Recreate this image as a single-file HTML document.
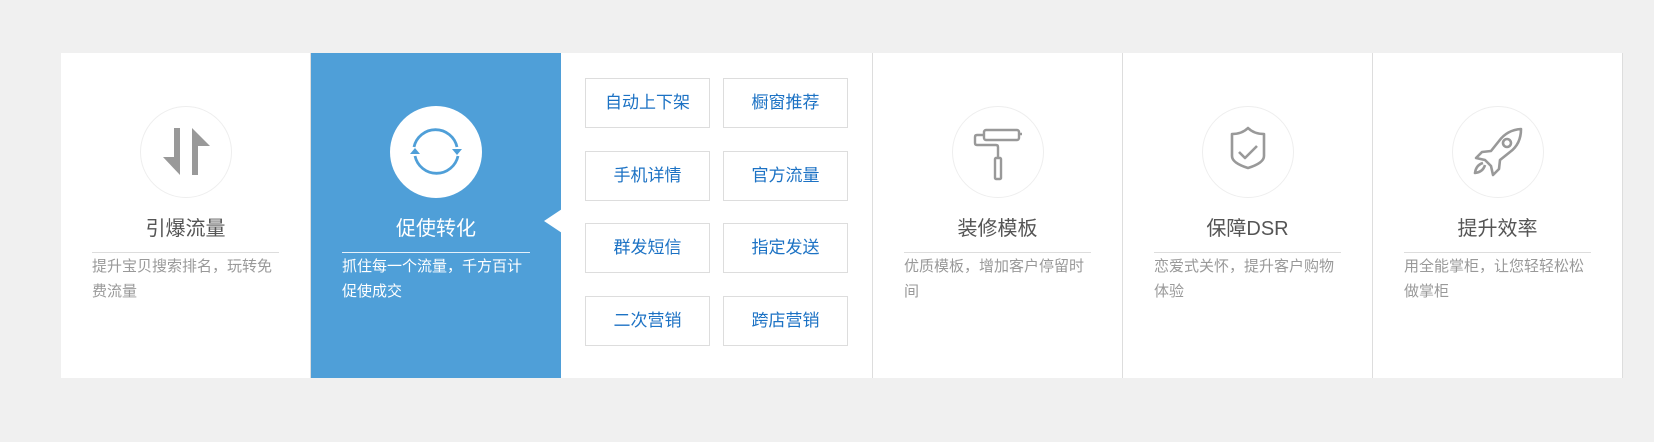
<!DOCTYPE html>
<html><head><meta charset="utf-8"><style>
*{margin:0;padding:0;box-sizing:border-box}
body{width:1654px;height:442px;background:#f0f0f0;position:relative;overflow:hidden;font-family:"Liberation Sans","Noto Sans CJK SC",sans-serif}
.card{position:absolute;left:61px;top:53px;width:1562px;height:325px;background:#fff;border-right:1px solid #ddd}
.col{position:absolute;top:0;height:325px;width:250px}
.sep{border-left:1px solid #ddd}
.ic{position:absolute;left:50%;margin-left:-46px;top:53px;width:92px;height:92px}
.t{position:absolute;left:0;right:0;top:161px;line-height:30px;text-align:center;font-size:20px;color:#555}
.ln{position:absolute;left:31px;right:31px;top:199px;border-top:1px solid #ddd}
.d{position:absolute;left:31px;right:27px;top:201px;font-size:15px;line-height:25px;color:#999}
.blue{background:#4f9fd8}
.blue .t{color:#fff}
.blue .ln{border-color:#e4f0fa}
.blue .d{color:#fff}
.btn{position:absolute;width:125px;height:50px;border:1px solid #ddd;color:#1c72c4;font-size:17px;line-height:48px;text-align:center}
</style></head><body>
<div class="card">
  <div class="col" style="left:0;width:249px">
    <svg class="ic" viewBox="4 6 92 92"><circle cx="50" cy="52" r="45.5" fill="none" stroke="#eee"/><polygon points="38,28 44,28 44,75 27,57 38,57" fill="#999"/><polygon points="56,28 74,46 62,46 62,75 56,75" fill="#999"/></svg>
    <div class="t">引爆流量</div><div class="ln"></div>
    <div class="d">提升宝贝搜索排名，玩转免费流量</div>
  </div>
  <div class="col sep blue" style="left:249px;width:251px">
    <svg class="ic" viewBox="5 6 92 92"><circle cx="51" cy="52" r="46" fill="#fff"/>
      <path d="M29 47 A22 22 0 0 1 72 47" fill="none" stroke="#4f9fd8" stroke-width="2.8"/>
      <path d="M73 56 A22 22 0 0 1 30 56" fill="none" stroke="#4f9fd8" stroke-width="2.8"/>
      <polygon points="67,49 77,49 72,55" fill="#4f9fd8"/><polygon points="25,54 35,54 30,48" fill="#4f9fd8"/></svg>
    <div class="t">促使转化</div><div class="ln"></div>
    <div class="d">抓住每一个流量，千方百计促使成交</div>
    <svg style="position:absolute;left:233px;top:156px" width="18" height="24"><polygon points="18,0 0,12 18,24" fill="#fff"/></svg>
  </div>
  <div class="col" style="left:500px;width:311px">
    <div class="btn" style="left:24px;top:25px">自动上下架</div><div class="btn" style="left:162px;top:25px">橱窗推荐</div>
    <div class="btn" style="left:24px;top:98px">手机详情</div><div class="btn" style="left:162px;top:98px">官方流量</div>
    <div class="btn" style="left:24px;top:170px">群发短信</div><div class="btn" style="left:162px;top:170px">指定发送</div>
    <div class="btn" style="left:24px;top:243px">二次营销</div><div class="btn" style="left:162px;top:243px">跨店营销</div>
  </div>
  <div class="col sep" style="left:811px">
    <svg class="ic" viewBox="4 6 92 92"><circle cx="50" cy="52" r="45.5" fill="none" stroke="#eee"/>
      <g fill="none" stroke="#999" stroke-width="2.4"><rect x="36" y="30" width="35" height="10" rx="2"/><path d="M71 34h3M36 35h-7q-2 0-2 2v6q0 2 2 2h19q2 0 2 2v10"/><rect x="47" y="58" width="6" height="21" rx="1"/></g></svg>
    <div class="t">装修模板</div><div class="ln"></div>
    <div class="d">优质模板，增加客户停留时间</div>
  </div>
  <div class="col sep" style="left:1061px">
    <svg class="ic" viewBox="4 6 92 92"><circle cx="50" cy="52" r="45.5" fill="none" stroke="#eee"/>
      <g fill="none" stroke="#999" stroke-width="2.6" stroke-linejoin="round"><path d="M50 28q-6 6-16 6v22q0 7 16 12q16-5 16-12v-22q-10 0-16-6z"/><path d="M41 52l6 6l12-12"/></g></svg>
    <div class="t">保障DSR</div><div class="ln"></div>
    <div class="d">恋爱式关怀，提升客户购物体验</div>
  </div>
  <div class="col sep" style="left:1311px">
    <svg class="ic" viewBox="4 6 92 92"><circle cx="50" cy="52" r="45.5" fill="none" stroke="#eee"/>
      <g fill="none" stroke="#999" stroke-width="2.6" stroke-linejoin="round"><path d="M73 29q-14 1-22 12l-8 10l-9 1l-6 6l9 2l6 6l2 9l6-6l1-9l10-8q11-8 11-23z"/><circle cx="59" cy="43" r="4"/><path d="M35 63q-7 2-8 10q8-1 10-8"/></g></svg>
    <div class="t">提升效率</div><div class="ln"></div>
    <div class="d">用全能掌柜，让您轻轻松松做掌柜</div>
  </div>
</div>
</body></html>
